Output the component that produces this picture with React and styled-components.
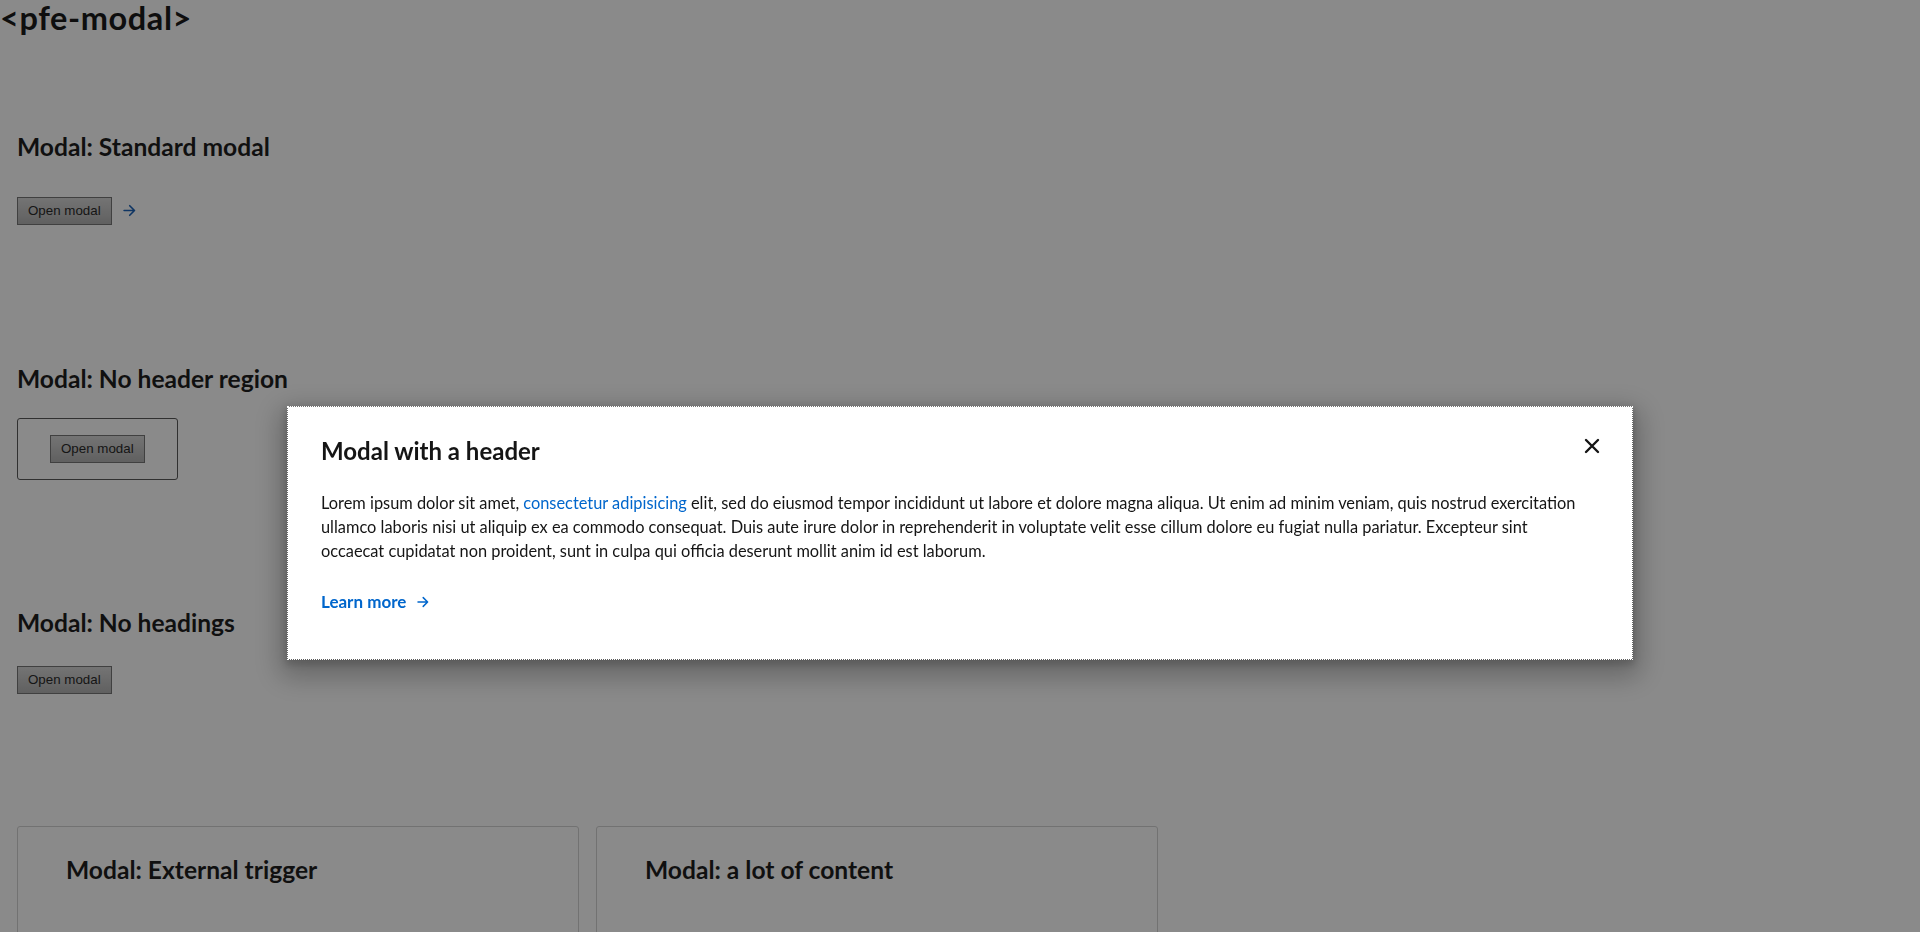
import React from "react";
import styled, { createGlobalStyle } from "styled-components";

const GlobalStyle = createGlobalStyle`
  html, body { margin: 0; padding: 0; background: #ffffff; }
  body {
    font-family: "Lato", "Noto Sans", sans-serif;
    color: #151515;
    min-height: 932px;
    overflow: hidden;
  }
  * { box-sizing: border-box; }
`;

const Page = styled.main`
  padding: 0;
`;

const PageTitle = styled.h1`
  margin: 0;
  font-family: "Lato", sans-serif;
  font-weight: 700;
  font-size: 32.5px;
  line-height: 1.1;
  letter-spacing: 0.6px;
  color: #1a1a1a;
`;

const Content = styled.div`
  padding: 0 17px;
`;

const Section = styled.section`
  margin-top: ${(p) => p.$top}px;
`;

const SectionHeading = styled.h2`
  margin: 0;
  font-family: "Lato", sans-serif;
  font-weight: 700;
  font-size: 24.6px;
  line-height: 30px;
  color: #1f1f1f;
`;

const TriggerRow = styled.div`
  display: flex;
  align-items: center;
  gap: 11px;
  margin-top: ${(p) => p.$gap}px;
`;

const Button = styled.button`
  font-family: "Liberation Sans", Arial, sans-serif;
  font-size: 13.33px;
  color: #2a2a2a;
  height: 28px;
  padding: 0 10px;
  border: 1px solid #767676;
  border-radius: 0;
  background: linear-gradient(#d6d6d6, #b2b2b2);
  cursor: pointer;
`;

const ArrowLink = styled.a`
  display: inline-flex;
  color: #1d63b8;
`;

const BoxedTrigger = styled.div`
  display: inline-flex;
  margin-top: 24px;
  padding: 16px 32px;
  border: 1px solid #5a5a5a;
  border-radius: 3px;
`;

const CardGrid = styled.div`
  display: grid;
  grid-template-columns: 562px 562px;
  gap: 17px;
  margin-top: 132px;
`;

const Card = styled.div`
  height: 200px;
  padding: 28px 48px;
  border: 1px solid #d2d2d2;
  border-radius: 3px;
`;

const Overlay = styled.div`
  position: fixed;
  inset: 0;
  background: rgba(0, 0, 0, 0.46);
  display: flex;
  justify-content: center;
  align-items: flex-start;
  padding-top: 407px;
`;

const Modal = styled.div`
  position: relative;
  width: 1344px;
  background: #ffffff;
  outline: 1px dotted #ffffff;
  box-shadow: 0 10px 26px 8px rgba(0, 0, 0, 0.26), 0 3px 7px 3px rgba(0, 0, 0, 0.15);
  padding: 29px 50px 45px 33px;
`;

const ModalTitle = styled.h2`
  margin: 0;
  font-family: "Lato", sans-serif;
  font-weight: 700;
  font-size: 24px;
  line-height: 30px;
  color: #151515;
`;

const CloseButton = styled.button`
  position: absolute;
  top: 31px;
  right: 32px;
  width: 16px;
  height: 16px;
  padding: 0;
  border: 0;
  background: transparent;
  display: flex;
  cursor: pointer;
`;

const Body = styled.p`
  margin: 25px 0 0;
  font-family: "Lato", sans-serif;
  font-size: 16.36px;
  line-height: 24px;
  color: #151515;
`;

const InlineLink = styled.a`
  color: #0066cc;
  text-decoration: none;
`;

const LearnMore = styled.a`
  display: inline-flex;
  align-items: center;
  gap: 11px;
  margin-top: 27px;
  font-family: "Lato", sans-serif;
  font-weight: 700;
  font-size: 17px;
  line-height: 24px;
  color: #0066cc;
  text-decoration: none;
`;

const Footer = styled.div`
  display: flex;
`;

const Arrow = ({ size = 12 }) => (
  <svg width={size} height={size} viewBox="0 0 12 12" fill="none" aria-hidden="true">
    <path d="M1 6h9.5M6.2 1.6 10.6 6l-4.4 4.4" stroke="currentColor" strokeWidth="1.5" strokeLinecap="round" strokeLinejoin="round" />
  </svg>
);

const CloseIcon = () => (
  <svg width="16" height="16" viewBox="0 0 16 16" aria-hidden="true">
    <path d="M2 2l12 12M14 2 2 14" stroke="#151515" strokeWidth="2.4" strokeLinecap="round" />
  </svg>
);

export default function App() {
  return (
    <>
      <GlobalStyle />
      <Page>
        <PageTitle>&lt;pfe-modal&gt;</PageTitle>

        <Content>
          <Section $top={96}>
            <SectionHeading>Modal: Standard modal</SectionHeading>
            <TriggerRow $gap={35}>
              <Button>Open modal</Button>
              <ArrowLink href="#">
                <Arrow size={13} />
              </ArrowLink>
            </TriggerRow>
          </Section>

          <Section $top={139}>
            <SectionHeading>Modal: No header region</SectionHeading>
            <BoxedTrigger>
              <Button>Open modal</Button>
            </BoxedTrigger>
          </Section>

          <Section $top={128}>
            <SectionHeading>Modal: No headings</SectionHeading>
            <TriggerRow $gap={28}>
              <Button>Open modal</Button>
            </TriggerRow>
          </Section>

          <CardGrid>
            <Card>
              <SectionHeading>Modal: External trigger</SectionHeading>
            </Card>
            <Card>
              <SectionHeading>Modal: a lot of content</SectionHeading>
            </Card>
          </CardGrid>
        </Content>
      </Page>

      <Overlay>
        <Modal role="dialog" aria-modal="true">
          <ModalTitle>Modal with a header</ModalTitle>
          <CloseButton aria-label="Close dialog">
            <CloseIcon />
          </CloseButton>
          <Body>
            Lorem ipsum dolor sit amet, <InlineLink href="#">consectetur adipisicing</InlineLink> elit, sed do
            eiusmod tempor incididunt ut labore et dolore magna aliqua. Ut enim ad minim veniam, quis nostrud
            exercitation ullamco laboris nisi ut aliquip ex ea commodo consequat. Duis aute irure dolor in
            reprehenderit in voluptate velit esse cillum dolore eu fugiat nulla pariatur. Excepteur sint occaecat
            cupidatat non proident, sunt in culpa qui officia deserunt mollit anim id est laborum.
          </Body>
          <Footer>
            <LearnMore href="#">
              Learn more <Arrow />
            </LearnMore>
          </Footer>
        </Modal>
      </Overlay>
    </>
  );
}
